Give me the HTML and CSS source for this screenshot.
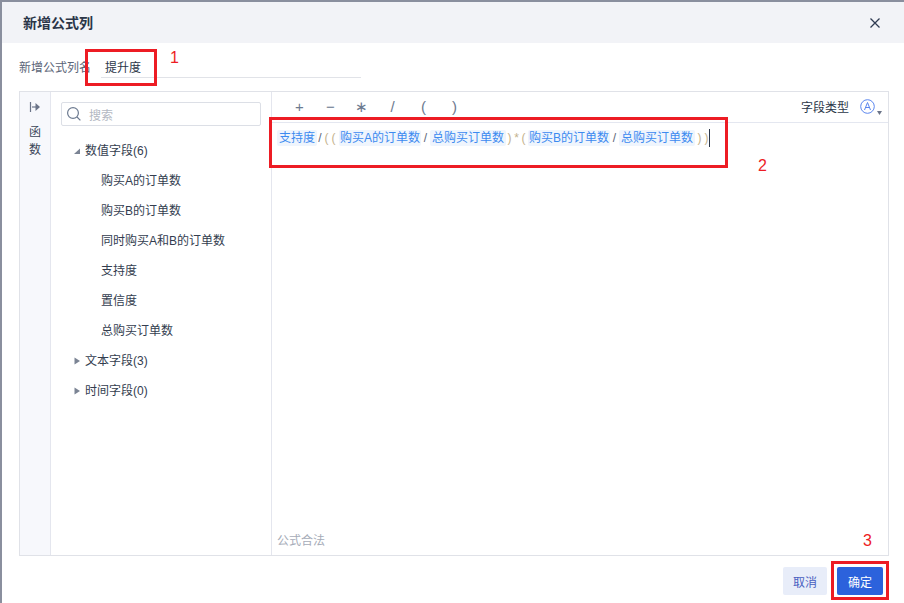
FILE: index.html
```html
<!DOCTYPE html>
<html lang="zh">
<head>
<meta charset="utf-8">
<title>新增公式列</title>
<link rel="stylesheet" href="styles.css">
</head>
<body>
<div class="dialog">
  <header class="dlg-head">
    <h1 class="dlg-title">新增公式列</h1>
    <svg class="close" width="12" height="12" viewBox="0 0 12 12"><path d="M1.500 1.500l9 9M10.500 1.500l-9 9" stroke="#2f3b52" stroke-width="1.300" fill="none"/></svg>
  </header>
  <div class="name-row">
    <span class="name-label">新增公式列名</span>
    <div class="name-input">提升度</div>
  </div>
  <div class="panel">
    <aside class="rail">
      <svg class="rail-icon" width="12" height="10" viewBox="0 0 12 10"><path d="M1.500 0v10" stroke="#6b7488" stroke-width="1.200"/><path d="M3 5h4" stroke="#6b7488" stroke-width="1.200"/><path d="M6.500 1l4.500 4-4.500 4z" fill="#6b7488"/></svg>
      <div class="rail-text">函<br>数</div>
    </aside>
    <section class="tree">
      <div class="search">
        <svg width="16" height="16" viewBox="0 0 16 16"><circle cx="7" cy="7" r="5.400" stroke="#6c7a90" stroke-width="1.200" fill="none"/><path d="M11 11l3.400 3.400" stroke="#6c7a90" stroke-width="1.200"/></svg>
        <span class="search-ph">搜索</span>
      </div>
      <ul class="nodes">
        <li class="node"><svg class="tri" width="8" height="8" viewBox="0 0 8 8"><path d="M7 1.500v5.500H1z" fill="#7b8494"/></svg>数值字段(6)</li>
        <li class="leaf">购买A的订单数</li>
        <li class="leaf">购买B的订单数</li>
        <li class="leaf">同时购买A和B的订单数</li>
        <li class="leaf">支持度</li>
        <li class="leaf">置信度</li>
        <li class="leaf">总购买订单数</li>
        <li class="node"><svg class="tri" width="8" height="8" viewBox="0 0 8 8"><path d="M1.500 0.500L7 4 1.500 7.500z" fill="#7b8494"/></svg>文本字段(3)</li>
        <li class="node"><svg class="tri" width="8" height="8" viewBox="0 0 8 8"><path d="M1.500 0.500L7 4 1.500 7.500z" fill="#7b8494"/></svg>时间字段(0)</li>
      </ul>
    </section>
    <section class="editor">
      <div class="toolbar">
        <div class="ops"><span>+</span><span>−</span><span>∗</span><span>/</span><span>(</span><span>)</span></div>
        <div class="type">
          <span>字段类型</span>
          <svg class="type-icon" width="15" height="15" viewBox="0 0 15 15"><circle cx="7.500" cy="7.500" r="6.800" stroke="#5b86ee" stroke-width="1" fill="none"/><path d="M4.500 11L7.500 3.500 10.500 11M5.500 8.500h4" stroke="#5b86ee" stroke-width="1" fill="none"/></svg>
          <svg class="type-caret" width="5" height="4" viewBox="0 0 5 4"><path d="M0 0h5L2.500 4z" fill="#6b7488"/></svg>
        </div>
      </div>
      <div class="formula"><span class="tok">支持度</span><span class="op op-s">/</span><span class="par">(</span><span class="par par-e">(</span><span class="tok tok-l">购买A的订单数</span><span class="op">/</span><span class="tok">总购买订单数</span><span class="par">)</span><span class="par">*</span><span class="par par-f">(</span><span class="tok tok-l">购买B的订单数</span><span class="op">/</span><span class="tok">总购买订单数</span><span class="par par-g">)</span><span class="par">)</span><span class="caret"></span></div>
      <div class="status">公式合法</div>
    </section>
  </div>
  <footer class="dlg-foot">
    <button class="btn btn-cancel">取消</button>
    <button class="btn btn-ok">确定</button>
  </footer>
</div>
<div class="mark mark-1"></div>
<div class="mark mark-2"></div>
<div class="mark mark-3"></div>
<span class="num num-1">1</span>
<span class="num num-2">2</span>
<span class="num num-3">3</span>
</body>
</html>
```

FILE: styles.css
```css
* { box-sizing: border-box; }
html, body { margin: 0; height: 100%; }
body {
  width: 904px; height: 603px; overflow: hidden; position: relative;
  background: #8a8f9e; padding: 2px 0 0 2px;
  font-family: "Liberation Sans", "Noto Sans CJK SC", sans-serif;
  font-size: 12px; color: #2b3648;
}
.dialog { width: 902px; height: 601px; background: #fff; display: flex; flex-direction: column; }
.dlg-head { height: 41px; flex: none; background: #f2f3f7; display: flex; align-items: center; justify-content: space-between; padding: 0 23px 2px 21px; }
.close { margin-top: 2px; }
.dlg-title { margin: 0; font-size: 14px; font-weight: bold; color: #2b3648; }
.name-row { height: 48px; flex: none; display: flex; padding: 0 0 0 17px; align-items: flex-start; }
.name-label { width: 82px; margin-top: 17px; line-height: 16px; color: #5b6578; }
.name-input { width: 260px; height: 35px; padding: 17px 0 0 4px; line-height: 16px; border-bottom: 1px solid #e1e3e8; color: #2b3648; }
.panel { margin-left: 17px; width: 870px; height: 465px; flex: none; border: 1px solid #e0e2e8; display: flex; }
.rail { width: 31px; flex: none; background: #f7f8fc; border-right: 1px solid #e4e6ee; display: flex; flex-direction: column; align-items: center; padding-top: 10px; }
.rail-icon { margin-bottom: 11px; }
.rail-text { line-height: 18px; color: #3a4558; }
.tree { width: 221px; flex: none; border-right: 1px solid #e4e6ee; padding: 10px 10px 0 10px; }
.search { width: 200px; height: 24px; border: 1px solid #dcdfe6; border-radius: 2px; display: flex; align-items: center; padding-left: 4px; gap: 7px; }
.search-ph { color: #b3b8c2; }
.nodes { list-style: none; margin: 10px 0 0; padding: 0; }
.node, .leaf { height: 30px; line-height: 30px; white-space: nowrap; color: #333d4f; }
.node { padding-left: 12px; display: flex; align-items: center; }
.tri { margin-right: 4px; flex: none; }
.leaf { padding-left: 40px; }
.editor { flex: 1; min-width: 0; display: flex; flex-direction: column; }
.toolbar { height: 31px; flex: none; border-bottom: 1px solid #e4e7f0; display: flex; justify-content: space-between; align-items: center; padding: 0 6px 1px 12px; }
.ops { display: flex; font-size: 15px; color: #6c7a90; }
.ops span { width: 31px; text-align: center; }
.type { display: flex; align-items: center; color: #2b3648; }
.type-icon { margin: 0 2px 0 11px; }
.type-caret { align-self: flex-end; margin-bottom: 0; }
.formula { height: 30px; display: flex; align-items: center; padding: 0 0 0 5px; white-space: nowrap; }
.tok { background: #eff5fd; color: #3c8af0; border-radius: 2px; padding: 0 2px; line-height: 16px; flex: none; }
.tok-l { width: 82px; padding: 0 1px; }
.op { width: 9px; text-align: center; color: #5c6678; flex: none; }
.op-s { width: 6px; }
.par { color: #c4b28c; width: 7px; text-align: center; flex: none; }
.par-e { margin-right: 2px; }
.par-f { margin-right: 1px; }
.par-g { margin-left: 1px; }
.caret { width: 1px; height: 18px; background: #2b3648; margin-left: -1px; flex: none; }
.status { margin-top: auto; padding: 0 0 7px 5px; color: #a6acb8; }
.dlg-foot { flex: 1; display: flex; justify-content: flex-end; align-items: flex-start; gap: 10px; padding: 11px 21px 0 0; }
.btn { height: 28px; border: 0; border-radius: 2px; font: inherit; padding: 0; }
.btn-cancel { width: 44px; background: #e8edf9; color: #4a5fc0; }
.btn-ok { width: 46px; background: #2c62dc; color: #fff; }
.mark { position: absolute; border: 3px solid #ed1c24; }
.mark-1 { left: 85px; top: 49px; width: 72px; height: 37px; }
.mark-2 { left: 269px; top: 117px; width: 459px; height: 51px; }
.mark-3 { left: 831px; top: 561px; width: 58px; height: 39px; }
.num { position: absolute; color: #ed1c24; font-size: 16px; line-height: 18px; }
.num-1 { left: 170px; top: 49px; }
.num-2 { left: 758px; top: 157px; }
.num-3 { left: 863px; top: 532px; }
```
